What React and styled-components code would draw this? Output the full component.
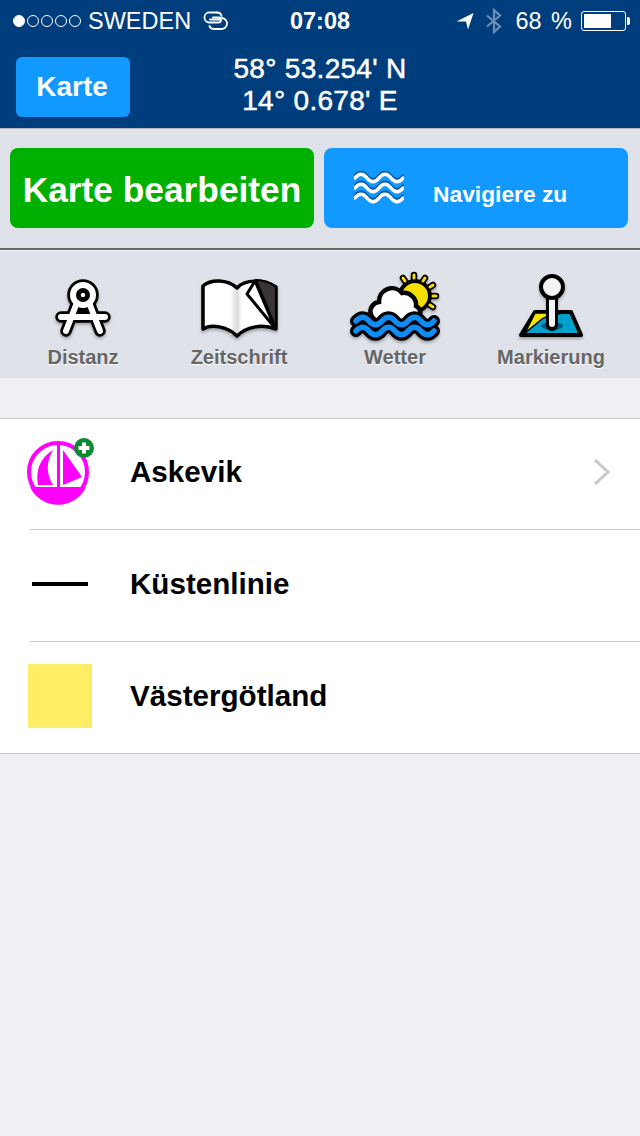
import styled, { createGlobalStyle } from "styled-components";

const GlobalStyle = createGlobalStyle`
  html, body {
    margin: 0;
    padding: 0;
    background: #efeff4;
    font-family: "Liberation Sans", Arial, sans-serif;
  }
  * { box-sizing: border-box; }
`;

const Page = styled.div`
  width: 640px;
  height: 1136px;
  overflow: hidden;
  background: #efeff4;
`;

const Header = styled.header`
  height: 129px;
  background: #003d7c;
  border-bottom: 1px solid #b4b6ba;
  color: #fff;
`;

const StatusBar = styled.div`
  height: 42px;
  padding: 0 10px 0 13px;
  display: grid;
  grid-template-columns: 1fr auto 1fr;
  align-items: center;
  font-size: 23.5px;
`;

const StatusLeft = styled.div`
  display: flex;
  align-items: center;
`;

const StatusRight = styled.div`
  display: flex;
  align-items: center;
  justify-content: flex-end;
`;

const Dots = styled.div`
  display: flex;
  gap: 2px;
  margin-right: 7px;
`;

const Dot = styled.span`
  width: 12px;
  height: 12px;
  border-radius: 50%;
  border: 1px solid #fff;
  background: ${(p) => (p.$on ? "#fff" : "transparent")};
`;

const Time = styled.div`
  font-weight: 700;
  font-size: 23.5px;
  margin-left: -3px;
`;

const Percent = styled.span`
  margin: 0 9px 0 13px;
  word-spacing: 3px;
`;

const Battery = styled.div`
  width: 45px;
  height: 20px;
  border: 1px solid #fff;
  border-radius: 3px;
  padding: 2px;
  margin-right: 4px;
  position: relative;
  &::after {
    content: "";
    position: absolute;
    right: -5px;
    top: 5px;
    width: 3px;
    height: 8px;
    background: #fff;
    border-radius: 0 2px 2px 0;
  }
`;

const BatteryFill = styled.div`
  height: 100%;
  background: #fff;
`;

const NavRow = styled.div`
  display: flex;
  padding: 15px 0 0 16px;
`;

const BackButton = styled.div`
  width: 114px;
  height: 60px;
  background: #1199ff;
  border-radius: 6px;
  padding-right: 2px;
  display: flex;
  align-items: center;
  justify-content: center;
  font-size: 28px;
  font-weight: 700;
`;

const Coords = styled.div`
  width: 380px;
  text-align: center;
  font-size: 28px;
  line-height: 32px;
  margin-top: -4px;
  letter-spacing: 0.3px;
  -webkit-text-stroke: 0.5px #fff;
`;

const Panel = styled.div`
  background: #dfe2e8;
`;

const Actions = styled(Panel)`
  height: 121px;
  padding: 19px 12px 0 10px;
  display: grid;
  grid-template-columns: 304px 304px;
  grid-template-rows: 80px;
  gap: 10px;
  border-bottom: 2px solid #666;
`;

const EditButton = styled.div`
  background: #00b000;
  border-radius: 8px;
  color: #fff;
  font-size: 35.3px;
  font-weight: 700;
  padding-top: 3px;
  display: flex;
  align-items: center;
  justify-content: center;
`;

const NavigateButton = styled.div`
  background: #1199ff;
  border-radius: 8px;
  color: #fff;
  font-size: 22.8px;
  font-weight: 700;
  display: flex;
  align-items: center;
  padding: 13px 0 0 30px;
  svg { margin: -13px 29px 0 0; }
`;

const Tools = styled(Panel)`
  height: 127px;
  margin-top: 1px;
  padding-left: 5px;
  display: grid;
  grid-template-columns: repeat(4, 156px);
`;

const Tool = styled.div`
  display: flex;
  flex-direction: column;
  align-items: center;
  justify-content: flex-end;
  padding-bottom: 9px;
`;

const IconBox = styled.div`
  height: 72px;
  display: flex;
  align-items: flex-end;
  justify-content: center;
  svg {
    display: block;
    overflow: visible;
    filter: drop-shadow(0 2px 1.5px rgba(0, 0, 0, 0.3));
  }
`;

const ToolLabel = styled.div`
  font-size: 20px;
  font-weight: 700;
  color: #666;
  text-shadow: 0 1px 0 #fff;
  margin-top: 6px;
  line-height: 24px;
`;

const List = styled.div`
  margin-top: 40px;
  height: 336px;
  background: #fff;
  border-top: 1px solid #c8c7cc;
  border-bottom: 1px solid #c8c7cc;
`;

const Row = styled.div`
  height: 112px;
  padding: 0 0 6px 28px;
  display: flex;
  align-items: center;
  position: relative;
  &:not(:last-child)::after {
    content: "";
    position: absolute;
    left: 30px;
    right: 0;
    bottom: 1px;
    height: 1px;
    background: #c8c7cc;
  }
`;

const RowIcon = styled.div`
  width: 64px;
  height: 64px;
  margin-right: 38px;
  display: flex;
  align-items: center;
  justify-content: center;
  position: relative;
  svg { flex-shrink: 0; }
`;

const RowTitle = styled.div`
  font-size: 29.6px;
  font-weight: 700;
  color: #000;
  flex: 1;
`;

const Chevron = styled.svg`
  margin-right: 29px;
`;

const CoastLine = styled.div`
  width: 56px;
  height: 4px;
  background: #000;
`;

const Swatch = styled.div`
  width: 64px;
  height: 64px;
  background: #ffed66;
`;

const LinkIcon = () => (
  <svg width="26" height="20" viewBox="0 0 26 20" fill="none" stroke="#fff" strokeWidth="1.8" strokeLinecap="round" style={{ marginLeft: 11 }}>
    <path d="M15 1.500H8a5 5 0 0 0-1 10h9.500a2.500 2.500 0 0 0 0-5H11" />
    <path d="M8 8.500h9.500" />
    <path d="M15 1.500c2 0 4 1 4.500 3.500M20 7a5.500 5.500 0 0 1-1 11h-7c-2.500 0-4-1-4.500-3" />
  </svg>
);

const LocationIcon = () => (
  <svg width="18" height="18" viewBox="0 0 18 18">
    <path d="M0.5 9.5 17.5 1 12 17.5 10 9.5Z" fill="#fff" />
  </svg>
);

const BluetoothIcon = () => (
  <svg width="16" height="26" viewBox="0 0 16 26" fill="none" stroke="#6b8fb6" strokeWidth="2.2" style={{ marginLeft: 12 }}>
    <path d="M1 7.500 14 18.500 8 24V2L14 7.500 1 18.500" />
  </svg>
);

const WavesIcon = () => (
  <svg width="50" height="34" viewBox="0 0 50 34" fill="none" strokeLinecap="round">
    {[5, 15, 25].map((y) => (
      <g key={y}>
        <path d={`M1 ${y}c4-5 8-5 12 0s8 5 12 0 8-5 12 0 8 5 12 0`} stroke="#0d5c9e" strokeWidth="3.500" />
        <path d={`M1 ${y + 2}c4-5 8-5 12 0s8 5 12 0 8-5 12 0 8 5 12 0`} stroke="#fff" strokeWidth="3.500" />
      </g>
    ))}
  </svg>
);

const compassLegs = "M19 26 9 52M33 26l10 26M4 38h44";

const CompassIcon = () => (
  <svg width="52" height="60" viewBox="0 0 52 60" fill="none" strokeLinecap="round" strokeLinejoin="round">
    <g stroke="#000" strokeWidth="11.500">
      <circle cx="26" cy="16" r="10" />
      <path d={compassLegs} />
    </g>
    <g stroke="#fff" strokeWidth="6">
      <path d={compassLegs} />
      <circle cx="26" cy="16" r="10" />
    </g>
    <path d="M22 30h8l1.500 5h-11Z" fill="#000" />
    <circle cx="26" cy="16" r="4" fill="#fff" stroke="#000" strokeWidth="3.500" />
  </svg>
);

const BookIcon = () => (
  <svg width="80" height="60" viewBox="0 0 80 60">
    <defs>
      <linearGradient id="spine" x1="0" x2="1" y1="0" y2="0">
        <stop offset="0" stopColor="#fff" />
        <stop offset="0.6" stopColor="#c4c4c4" />
        <stop offset="1" stopColor="#fff" />
      </linearGradient>
    </defs>
    <path d="M4 7C12 0 28 0 38 9 46 0 64 0 77 8V50C64 45 48 47 38 57 28 47 12 45 4 50Z" fill="#fff" />
    <path d="M31 8h12v48H31Z" fill="url(#spine)" opacity="0.6" />
    <path d="M4 7C12 0 28 0 38 9 46 0 64 0 77 8V50C64 45 48 47 38 57 28 47 12 45 4 50Z" fill="none" stroke="#000" strokeWidth="3.500" strokeLinejoin="round" />
    <path d="M57 1C64 1 72 4 77 8V49Z" fill="#3a3436" stroke="#000" strokeWidth="2" strokeLinejoin="round" />
    <path d="M56 2 48 15 76 49 62 16Z" fill="#fff" stroke="#000" strokeWidth="3" strokeLinejoin="round" />
  </svg>
);

const wave = (y) => `M6 ${y}c4.500-5 9-5 13 0s9 5 13 0 9-5 13 0 9 5 13 0 9-5 13 0 9 5 13 0`;
const sunRays = "M64 4v3M53 7l2 3M75 7l-2 3M83 14l-3 2M86 25h-3M83 36l-3-2";

const WeatherIcon = () => (
  <svg width="92" height="68" viewBox="0 0 92 68" fill="none" strokeLinecap="round" style={{ marginLeft: 2 }}>
    <g stroke="#000" strokeWidth="6.500">
      <path d={sunRays} />
    </g>
    <circle cx="65" cy="25" r="17" fill="#000" />
    <g stroke="#f5df00" strokeWidth="3">
      <path d={sunRays} />
    </g>
    <circle cx="65" cy="25" r="14" fill="#f5df00" stroke="#000" strokeWidth="2" />
    <path d="M31 50a9 9 0 0 1-2-19 13 13 0 0 1 23-9 12 12 0 0 1 14 13 8 8 0 0 1-3 15Z" fill="#fff" stroke="#000" strokeWidth="4.500" />
    {[50, 60].map((y) => (
      <path key={y} d={wave(y)} stroke="#000" strokeWidth="12" />
    ))}
    {[50, 60].map((y) => (
      <path key={y} d={wave(y)} stroke="#0f8cf5" strokeWidth="5.500" />
    ))}
  </svg>
);

const MarkerIcon = () => (
  <svg width="66" height="64" viewBox="0 0 66 64" strokeLinejoin="round">
    <path d="M17 37H53L63 60H3Z" fill="#00a0cc" stroke="#000" strokeWidth="4" />
    <path d="M17 38 7 58 24 44C30 40 38 39 46 38Z" fill="#f5e400" stroke="#000" strokeWidth="1.500" />
    <ellipse cx="34" cy="51" rx="11" ry="4" fill="#00597e" />
    <path d="M34 50V20" stroke="#000" strokeWidth="12" strokeLinecap="round" />
    <path d="M34 49V20" stroke="#f3f3f3" strokeWidth="6" strokeLinecap="round" />
    <circle cx="34" cy="12" r="11" fill="#f3f3f3" stroke="#000" strokeWidth="4" />
  </svg>
);

const BoatIcon = () => (
  <svg width="68" height="68" viewBox="0 0 68 68">
    <circle cx="32" cy="36" r="31" fill="#d8d8d8" opacity="0.5" />
    <circle cx="32" cy="34" r="29" fill="#fff" stroke="#ff00ff" strokeWidth="4" />
    <path d="M4 49H60A31 31 0 0 1 4 49Z" fill="#ff00ff" />
    <path d="M31 5h3v44h-3Z" fill="#ff00ff" />
    <path d="M27 12C17 18 9 29 12 47H27C20 36 20 24 27 12Z" fill="#ff00ff" />
    <path d="M37 12 56 39 37 47Z" fill="#ff00ff" />
    <circle cx="58" cy="10" r="10" fill="#0a8a30" />
    <path d="M58 4.500v11M52.500 10h11" stroke="#fff" strokeWidth="4" />
  </svg>
);

const tools = [
  { label: "Distanz", icon: <CompassIcon /> },
  { label: "Zeitschrift", icon: <BookIcon /> },
  { label: "Wetter", icon: <WeatherIcon /> },
  { label: "Markierung", icon: <MarkerIcon /> },
];

export default function App() {
  return (
    <Page>
      <GlobalStyle />
      <Header>
        <StatusBar>
          <StatusLeft>
            <Dots>
              {[true, false, false, false, false].map((on, i) => (
                <Dot key={i} $on={on} />
              ))}
            </Dots>
            SWEDEN
            <LinkIcon />
          </StatusLeft>
          <Time>07:08</Time>
          <StatusRight>
            <LocationIcon />
            <BluetoothIcon />
            <Percent>68 %</Percent>
            <Battery>
              <BatteryFill style={{ width: "68%" }} />
            </Battery>
          </StatusRight>
        </StatusBar>
        <NavRow>
          <BackButton>Karte</BackButton>
          <Coords>
            58° 53.254' N
            <br />
            14° 0.678' E
          </Coords>
        </NavRow>
      </Header>
      <Actions>
        <EditButton>Karte bearbeiten</EditButton>
        <NavigateButton>
          <WavesIcon />
          Navigiere zu
        </NavigateButton>
      </Actions>
      <Tools>
        {tools.map((t) => (
          <Tool key={t.label}>
            <IconBox>{t.icon}</IconBox>
            <ToolLabel>{t.label}</ToolLabel>
          </Tool>
        ))}
      </Tools>
      <List>
        <Row>
          <RowIcon>
            <BoatIcon />
          </RowIcon>
          <RowTitle>Askevik</RowTitle>
          <Chevron width="18" height="28" viewBox="0 0 18 28" fill="none" stroke="#c7c7cc" strokeWidth="3">
            <path d="M2 2 15 14 2 26" />
          </Chevron>
        </Row>
        <Row>
          <RowIcon>
            <CoastLine />
          </RowIcon>
          <RowTitle>Küstenlinie</RowTitle>
        </Row>
        <Row>
          <RowIcon>
            <Swatch />
          </RowIcon>
          <RowTitle>Västergötland</RowTitle>
        </Row>
      </List>
    </Page>
  );
}
